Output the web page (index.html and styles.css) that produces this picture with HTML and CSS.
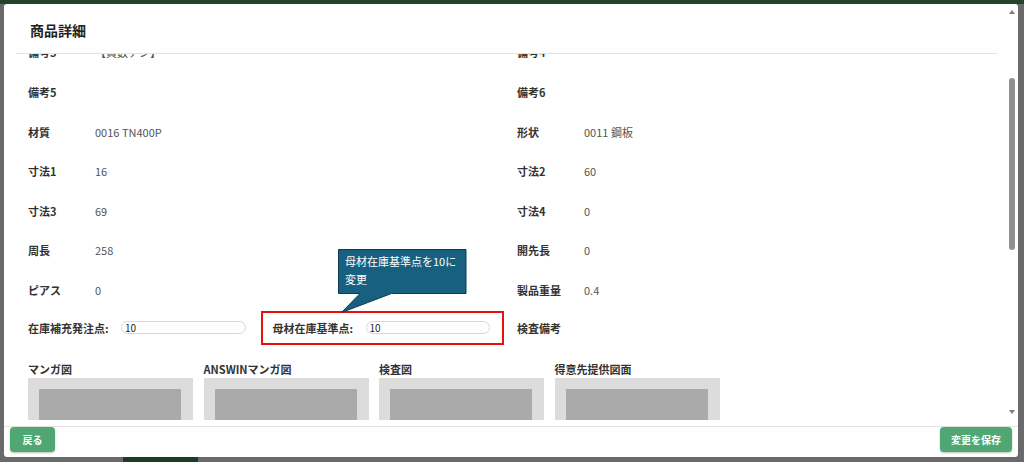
FILE: index.html
```html
<!DOCTYPE html>
<html lang="ja">
<head>
    <meta charset="UTF-8">
    <meta name="viewport" content="width=device-width, initial-scale=1.0">
    <title>商品詳細</title>
    <link rel="stylesheet" href="styles.css">
</head>
<body>
    <div class="backdrop-top"></div>

    <div class="modal">
        <div class="modal-scroll">
            <div class="modal-main">
                <div class="modal-header">
                    <h2>商品詳細</h2>
                </div>

                <div class="modal-body">
                    <!-- 詳細項目 -->
                    <div class="detail-grid">
                        <div class="field"><span class="field-label">備考3</span><span class="field-value">【員数ナシ】</span></div>
                        <div class="field"><span class="field-label">備考4</span><span class="field-value"></span></div>
                        <div class="field"><span class="field-label">備考5</span><span class="field-value"></span></div>
                        <div class="field"><span class="field-label">備考6</span><span class="field-value"></span></div>
                        <div class="field"><span class="field-label">材質</span><span class="field-value">0016 TN400P</span></div>
                        <div class="field"><span class="field-label">形状</span><span class="field-value">0011 鋼板</span></div>
                        <div class="field"><span class="field-label">寸法1</span><span class="field-value">16</span></div>
                        <div class="field"><span class="field-label">寸法2</span><span class="field-value">60</span></div>
                        <div class="field"><span class="field-label">寸法3</span><span class="field-value">69</span></div>
                        <div class="field"><span class="field-label">寸法4</span><span class="field-value">0</span></div>
                        <div class="field"><span class="field-label">周長</span><span class="field-value">258</span></div>
                        <div class="field"><span class="field-label">開先長</span><span class="field-value">0</span></div>
                        <div class="field"><span class="field-label">ピアス</span><span class="field-value">0</span></div>
                        <div class="field"><span class="field-label">製品重量</span><span class="field-value">0.4</span></div>
                    </div>

                    <!-- 在庫基準 -->
                    <div class="stock-row">
                        <div class="stock-cell">
                            <div class="stock-field">
                                <span class="stock-label">在庫補充発注点:</span>
                                <input class="stock-input" type="text" value="10">
                            </div>
                            <div class="stock-field highlight">
                                <span class="stock-label">母材在庫基準点:</span>
                                <input class="stock-input" type="text" value="10">
                                <div class="callout">
                                    <svg width="130" height="65" viewBox="0 0 130 65">
                                        <path d="M0.5 0.5 H128 V44.5 H53.5 L3.5 63.5 L22 44.5 H0.5 Z" fill="#17607f" stroke="#0d3c50" stroke-width="1"/>
                                    </svg>
                                    <div class="callout-text">母材在庫基準点を10に<br>変更</div>
                                </div>
                            </div>
                        </div>
                        <div class="field"><span class="field-label">検査備考</span></div>
                    </div>

                    <!-- 図面 -->
                    <div class="figures">
                        <div class="figure"><div class="figure-label">マンガ図</div><div class="figure-box"><div class="figure-img"></div></div></div>
                        <div class="figure"><div class="figure-label">ANSWINマンガ図</div><div class="figure-box"><div class="figure-img"></div></div></div>
                        <div class="figure"><div class="figure-label">検査図</div><div class="figure-box"><div class="figure-img"></div></div></div>
                        <div class="figure"><div class="figure-label">得意先提供図面</div><div class="figure-box"><div class="figure-img"></div></div></div>
                    </div>
                </div>
            </div>

            <div class="scrollbar">
                <span class="arrow-up"></span>
                <span class="thumb"></span>
                <span class="arrow-down"></span>
            </div>
        </div>

        <div class="modal-footer">
            <button class="btn btn-back">戻る</button>
            <button class="btn btn-save">変更を保存</button>
        </div>
    </div>

    <div class="backdrop-bottom">
        <span class="backdrop-block"></span>
    </div>
</body>
</html>
```

FILE: styles.css
```css
:root {
    --green: #4fa873;
    --label: #333333;
    --value: #555555;
    --line: #e3e3e3;
}

* {
    margin: 0;
    padding: 0;
    box-sizing: border-box;
}

body {
    background: #6a6a6a;
    font-family: 'Noto Sans CJK JP', 'Noto Sans', sans-serif;
    height: 462px;
    overflow: hidden;
}

.backdrop-top {
    height: 4px;
    background: #24432e;
}

.backdrop-bottom {
    height: 5px;
    padding-left: 123px;
}

.backdrop-block {
    display: block;
    width: 75px;
    height: 5px;
    background: #1f3a28;
}

.modal {
    margin-left: 4px;
    width: 1014px;
    height: 453px;
    background: #fff;
    border-radius: 3px;
    display: flex;
    flex-direction: column;
}

.modal-scroll {
    height: 416px;
    display: flex;
}

.modal-main {
    flex: 1;
    min-width: 0;
    display: flex;
    flex-direction: column;
}

.modal-header {
    height: 50px;
    margin: 0 9px 0 12px;
    padding: 3px 0 0 14px;
    border-bottom: 1px solid var(--line);
    display: flex;
    align-items: center;
}

.modal-header h2 {
    font-size: 14px;
    font-weight: 700;
    color: #222;
}

.modal-body {
    flex: 1;
    overflow: hidden;
    padding-left: 24px;
}

.detail-grid {
    margin-top: -21.4px;
    display: grid;
    grid-template-columns: 489px 1fr;
    grid-auto-rows: 39.6px;
}

.field {
    display: flex;
    align-items: center;
    font-size: 11px;
}

.field-label {
    width: 67px;
    font-weight: 700;
    color: var(--label);
}

.field-value {
    color: var(--value);
}

.stock-row {
    margin-top: 1px;
    height: 34px;
    display: grid;
    grid-template-columns: 489px 1fr;
}

.stock-cell {
    display: flex;
    align-items: center;
    gap: 15.5px;
}

.stock-field {
    display: flex;
    align-items: center;
    font-size: 11px;
}

.stock-label {
    width: 93px;
    font-weight: 700;
    color: var(--label);
}

.stock-input {
    width: 124.5px;
    height: 13px;
    border: 1px solid #d6d6d6;
    border-radius: 7px;
    padding: 0 3px;
    font-family: inherit;
    font-size: 10px;
    line-height: 11px;
    color: #222;
    background: #fff;
    outline: none;
}

.highlight {
    position: relative;
    height: 34px;
    border: 2px solid #e81010;
    padding: 0 12px 0 9.5px;
}

.callout {
    position: absolute;
    left: 75px;
    top: -63.5px;
    width: 130px;
    height: 65px;
}

.callout svg {
    display: block;
}

.callout-text {
    position: absolute;
    left: 7px;
    top: 3.9px;
    font-size: 11px;
    line-height: 17.6px;
    color: #fff;
    white-space: nowrap;
}

.figures {
    margin-top: 16px;
    display: grid;
    grid-template-columns: repeat(4, 165px);
    column-gap: 10.5px;
}

.figure-label {
    font-size: 11px;
    font-weight: 700;
    line-height: 16px;
    color: var(--label);
}

.figure-box {
    margin-top: 1px;
    height: 90px;
    padding: 11px 12px 0 11px;
    background: #dcdcdc;
}

.figure-img {
    height: 100%;
    background: #aaaaaa;
}

.scrollbar {
    width: 12px;
    display: flex;
    flex-direction: column;
    align-items: center;
}

.arrow-up,
.arrow-down {
    height: 16px;
    display: flex;
    align-items: center;
}

.arrow-up::before {
    content: '';
    border-left: 3.5px solid transparent;
    border-right: 3.5px solid transparent;
    border-bottom: 4px solid #7d7d7d;
}

.arrow-down {
    margin-top: auto;
}

.arrow-down::before {
    content: '';
    border-left: 3.5px solid transparent;
    border-right: 3.5px solid transparent;
    border-top: 4px solid #7d7d7d;
}

.thumb {
    margin-top: 58px;
    width: 6px;
    height: 172px;
    border-radius: 3px;
    background: #8f8f8f;
}

.modal-footer {
    margin-top: 6px;
    padding: 0 6px 5px;
    border-top: 1px solid var(--line);
    display: flex;
    justify-content: space-between;
}

.btn {
    height: 25px;
    border: none;
    border-radius: 4px;
    background: var(--green);
    color: #fff;
    font-family: inherit;
    font-size: 10px;
    font-weight: 700;
    box-shadow: 0 1px 2px rgba(0, 0, 0, 0.25);
    cursor: pointer;
}

.btn-back {
    width: 45px;
}

.btn-save {
    width: 72px;
}
```
